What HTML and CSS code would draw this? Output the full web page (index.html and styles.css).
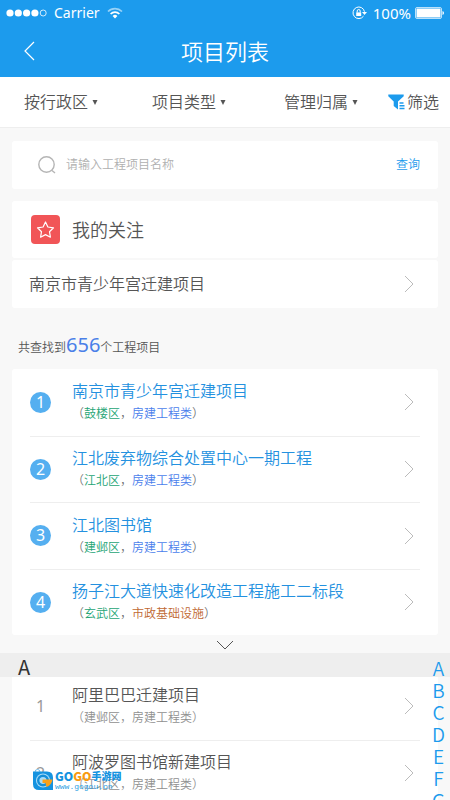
FILE: index.html
```html
<!DOCTYPE html>
<html lang="zh-CN">
<head>
<meta charset="utf-8">
<meta name="viewport" content="width=device-width, initial-scale=1">
<title>项目列表</title>
<link rel="stylesheet" href="styles.css">
</head>
<body>
<svg class="defs" aria-hidden="true">
  <symbol id="chevron" viewBox="0 0 10 18"><path d="M1 1l8 8-8 8" fill="none" stroke="currentColor"/></symbol>
  <symbol id="caret" viewBox="0 0 6 6"><path d="M0.500 1h5L3 6z" fill="currentColor"/></symbol>
</svg>
<div class="app">
  <header class="top">
    <div class="status">
      <svg class="signal" viewBox="0 0 42 8" aria-hidden="true"><g fill="#fff"><circle cx="4" cy="4" r="3.6"/><circle cx="12.3" cy="4" r="3.6"/><circle cx="20.6" cy="4" r="3.6"/><circle cx="28.9" cy="4" r="3.6"/></g><circle cx="37.2" cy="4" r="3" fill="none" stroke="#fff" stroke-width=".8"/></svg>
      <span class="carrier">Carrier</span>
      <svg class="wifi" viewBox="0 0 16 12" aria-hidden="true"><g fill="none" stroke="#fff" stroke-width="1.7"><path d="M1 4.5a10 10 0 0 1 14 0" opacity=".55"/><path d="M3.6 7a6.3 6.3 0 0 1 8.8 0"/></g><path d="M5.6 9a3.5 3.5 0 0 1 4.8 0L8 11.5z" fill="#fff"/></svg>
      <svg class="lock" viewBox="0 0 15 14" aria-hidden="true"><path d="M11.5 10.2a5.8 5.8 0 1 1 1-4.5" fill="none" stroke="#fff"/><path d="M10 6h5l-2.5 3z" fill="#fff"/><path d="M4.2 6.4h5V10h-5z" fill="#fff"/><path d="M5.2 6.5V5a1.5 1.5 0 0 1 3 0v1.5" fill="none" stroke="#fff"/></svg>
      <span>100%</span>
      <svg class="battery" viewBox="0 0 29 12" aria-hidden="true"><rect x=".5" y=".5" width="26" height="11" rx="1.5" fill="none" stroke="#fff" opacity=".7"/><rect x="1.5" y="1.5" width="24" height="9" rx=".5" fill="#fff"/><path d="M27.5 4q1.5.3 1.5 2t-1.5 2z" fill="#fff"/></svg>
    </div>
    <div class="nav">
      <button class="back" aria-label="返回"><svg viewBox="0 0 11 20"><path d="M10 1L1 10l9 9" fill="none" stroke="#fff" stroke-width="1.2"/></svg></button>
      <h1>项目列表</h1>
    </div>
  </header>
  <nav class="filters">
    <button>按行政区<svg class="caret"><use href="#caret"/></svg></button>
    <button>项目类型<svg class="caret"><use href="#caret"/></svg></button>
    <button>管理归属<svg class="caret"><use href="#caret"/></svg></button>
    <button class="pick"><svg class="funnel" viewBox="0 0 17 16" aria-hidden="true"><path d="M.3.5h15.400v1.800L10 7.500v8L5.700 12V7.500L.3 2.300z" fill="#1c9bed"/><path d="M11.500 9h4M11.500 11.800h5M11.500 14.500h5" stroke="#1c9bed" stroke-width="1.500"/></svg>筛选</button>
  </nav>
  <main>
    <form class="card search">
      <svg class="glass" viewBox="0 0 18 18" aria-hidden="true"><g fill="none" stroke="#b5b5b5" stroke-width="1.400"><circle cx="8.500" cy="8.500" r="7.700"/><path d="M14 14.500l3 2.500"/></g></svg>
      <input type="text" aria-label="工程项目名称" placeholder="请输入工程项目名称">
      <button type="button">查询</button>
    </form>
    <section>
      <div class="card follow">
        <svg class="star" viewBox="0 0 29 29" aria-hidden="true"><rect width="29" height="29" rx="4" fill="#f15557"/><path d="M14.500 7l2.400 5 5.600.8-4 3.900.9 5.500-4.900-2.600-4.900 2.600.9-5.500-4-3.900 5.600-.8z" fill="none" stroke="#fff" stroke-width="1.200" stroke-linejoin="round"/></svg>
        <h2>我的关注</h2>
      </div>
      <a class="card followed" href="#">南京市青少年宫迁建项目<svg class="chev"><use href="#chevron"/></svg></a>
    </section>
    <p class="count">共查找到<strong>656</strong>个工程项目</p>
    <ol class="card list">
      <li><a href="#"><span class="num">1</span><span class="info"><span class="name">南京市青少年宫迁建项目</span><span class="meta">（<i>鼓楼区</i>，<b>房建工程类</b>）</span></span><svg class="chev"><use href="#chevron"/></svg></a></li>
      <li><a href="#"><span class="num">2</span><span class="info"><span class="name">江北废弃物综合处置中心一期工程</span><span class="meta">（<i>江北区</i>，<b>房建工程类</b>）</span></span><svg class="chev"><use href="#chevron"/></svg></a></li>
      <li><a href="#"><span class="num">3</span><span class="info"><span class="name">江北图书馆</span><span class="meta">（<i>建邺区</i>，<b>房建工程类</b>）</span></span><svg class="chev"><use href="#chevron"/></svg></a></li>
      <li><a href="#"><span class="num">4</span><span class="info"><span class="name">扬子江大道快速化改造工程施工二标段</span><span class="meta">（<i>玄武区</i>，<b class="civic">市政基础设施</b>）</span></span><svg class="chev"><use href="#chevron"/></svg></a></li>
    </ol>
    <button class="more" aria-label="展开更多"><svg viewBox="0 0 18 10"><path d="M1 1l8 8 8-8" fill="none" stroke="#555"/></svg></button>
  </main>
  <section class="directory">
    <h2 class="letter">A</h2>
    <ol class="card list plain">
      <li><a href="#"><span class="num">1</span><span class="info"><span class="name">阿里巴巴迁建项目</span><span class="meta">（建邺区，房建工程类）</span></span><svg class="chev"><use href="#chevron"/></svg></a></li>
      <li><a href="#"><span class="num">2</span><span class="info"><span class="name">阿波罗图书馆新建项目</span><span class="meta">（江北区，房建工程类）</span></span><svg class="chev"><use href="#chevron"/></svg></a></li>
    </ol>
    <nav class="index" aria-label="字母索引"><a href="#">A</a><a href="#">B</a><a href="#">C</a><a href="#">D</a><a href="#">E</a><a href="#">F</a><a href="#">G</a></nav>
  </section>
  <div class="mark">
    <svg viewBox="0 0 20 21" aria-hidden="true"><path d="M2 3q0-2.500 2.500-2.500T7 3" fill="none" stroke="#6db8e8"/><path d="M0 2.500h14q6 0 6 6V21H6q-6 0-6-6z" fill="#1593e0"/><circle cx="10" cy="11.500" r="7" fill="#a9dcf8"/><circle cx="10" cy="11.500" r="4.800" fill="none" stroke="#168fd8" stroke-width="2.400"/><path d="M9.500 10.500h10q-1 6-6 7.500l-1-4h-3z" fill="#f9a11b"/></svg>
    <div class="brand"><span class="logo"><span>GO</span><em>GO</em><small>手游网</small></span><span class="site">www.gogou.cn</span></div>
  </div>
</div>
</body>
</html>
```
FILE: styles.css
```css
* { box-sizing: border-box; }
body {
  margin: 0;
  background: #f8f8f8;
  color: #555;
  font: 350 16px/24px "Noto Sans", "Noto Sans CJK SC", sans-serif;
}
h1, h2, p, ol { margin: 0; padding: 0; font-weight: inherit; }
ol { list-style: none; }
a { color: inherit; text-decoration: none; }
i, b, em { font-style: normal; font-weight: inherit; }
button { padding: 0; border: 0; background: none; color: inherit; font: inherit; cursor: pointer; }
svg { display: block; flex: none; }
.defs { position: absolute; width: 0; height: 0; }
.app { position: relative; height: 100vh; overflow: hidden; }

.top { background: #1c9bed; color: #fff; }
.status { display: flex; align-items: center; height: 25px; padding: 0 6px; font-size: 15px; font-weight: 400; }
.signal { width: 42px; height: 8px; margin-right: 6px; }
.carrier { font-size: 14px; }
.wifi { width: 16px; height: 12px; margin-left: 7px; }
.lock { width: 15px; height: 14px; margin: 0 6px 0 auto; }
.battery { width: 29px; height: 12px; margin-left: 4px; }
.nav { display: grid; grid-template-columns: 60px 1fr 60px; align-items: center; height: 52px; }
.nav h1 { font-size: 22px; line-height: 32px; text-align: center; }
.back { padding-left: 24px; }
.back svg { width: 11px; height: 20px; }

.filters {
  display: grid;
  grid-template-columns: 128fr 132fr 104fr 51px;
  align-items: center;
  height: 51px;
  padding: 0 11px 0 24px;
  border-bottom: 1px solid #eee;
  background: #fff;
}
.filters button { display: flex; align-items: center; gap: 4px; }
.filters .pick { gap: 2px; }
.caret { width: 6px; height: 6px; }
.funnel { width: 17px; height: 16px; }

main { padding: 13px 12px 0; }
.card { border-radius: 3px; background: #fff; }
.search { display: flex; align-items: center; gap: 10px; height: 48px; margin-bottom: 12px; padding: 0 18px 0 26px; }
.glass { width: 18px; height: 18px; }
.search input { flex: 1; min-width: 0; padding: 0; border: 0; outline: 0; background: none; font: inherit; font-size: 12px; }
.search input::placeholder { color: #b0b0b0; opacity: 1; }
.search button { color: #1c9bed; font-size: 12px; }
.follow { display: flex; align-items: center; gap: 12px; height: 57px; margin-bottom: 2px; padding: 0 19px; }
.follow h2 { font-size: 18px; }
.star { width: 29px; height: 29px; }
.followed { display: flex; align-items: center; justify-content: space-between; height: 48px; padding: 0 24px 0 17px; }
.chev { width: 10px; height: 18px; color: #bbb; }
.count { padding: 23px 6px 7px; font-size: 12px; line-height: 28px; }
.count strong { color: #4a7fe8; font-size: 20px; font-weight: 400; }

.list { display: grid; grid-auto-rows: 1fr; min-height: 266px; padding: 0 18px; }
.list li + li { border-top: 1px solid #eee; }
.list a { display: flex; align-items: center; height: 100%; padding-right: 6px; }
.num { width: 21px; height: 21px; margin-right: 21px; border-radius: 50%; background: #55aff0; color: #fff; font-weight: 400; line-height: 21px; text-align: center; }
.info { display: flex; flex: 1; flex-direction: column; }
.name { color: #2491df; line-height: 24px; }
.meta { color: #707070; font-size: 12px; line-height: 22px; }
.meta i { color: #24a475; }
.meta b { color: #4b7eec; }
.meta .civic { color: #c06832; }
.more { display: block; margin: 0 auto; padding: 5px 0 3px; }
.more svg { width: 18px; height: 10px; }

.directory { position: relative; }
.letter { position: relative; z-index: 1; height: 24px; padding: 0 18px; background: #eee; color: #333; font: 400 20px/28px "Noto Sans CJK SC", sans-serif; }
.plain { min-height: 133px; margin: -4px 12px 0; }
.plain .num { background: none; color: #999; }
.plain .name { color: #555; }
.plain .meta { color: #909090; }
.index { position: absolute; z-index: 1; top: 4px; right: 5px; display: flex; flex-direction: column; align-items: center; color: #1c9bed; font: 350 19px/22px "Noto Sans CJK SC", sans-serif; }

.mark { position: absolute; bottom: 10px; left: 33px; z-index: 2; display: flex; align-items: center; gap: 2px; }
.mark svg { width: 20px; height: 21px; }
.brand { display: flex; flex-direction: column; }
.logo { display: flex; align-items: center; color: #1593e0; font: 900 12px/14px "Noto Sans CJK SC", sans-serif; }
.logo em { color: #f99a10; }
.logo small { font-size: 10px; }
.site { color: #2b9fe3; font: 8px/7px "Liberation Mono", monospace; }
```
